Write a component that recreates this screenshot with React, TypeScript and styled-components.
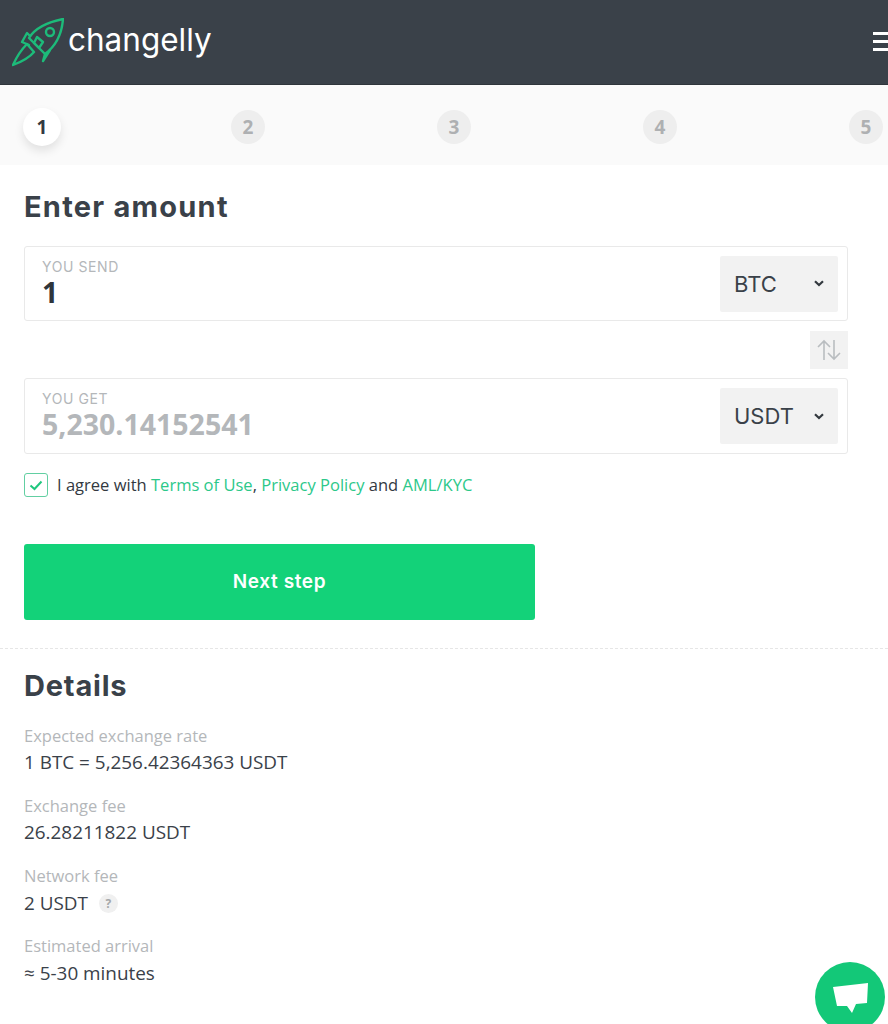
import styled, { createGlobalStyle } from "styled-components"

const GlobalStyle = createGlobalStyle`
    html, body {
        margin: 0;
        height: 1024px;
        overflow: hidden;
        background: #fff;
        font-family: "Open Sans", "Liberation Sans", sans-serif;
        color: #3a4149;
    }
    * { box-sizing: border-box; }
`

const Rocket = () => (
    <svg width="52" height="49" viewBox="0 0 52 49" fill="none" stroke="#1dbb7a" strokeWidth="2.4" strokeLinejoin="round" strokeLinecap="round">
        <path d="M1 47 C5 38 10 31 15 26 L22 34 C17 40 9 44 1 47 Z" />
        <path d="M17 20 C23 10 36 4 51 1 C50 14 45 27 33 36 Z" />
        <path d="M18 18 L15 15 L10 24 L17 27" />
        <path d="M33 36 L31 43 L38 32" />
        <circle cx="38" cy="14" r="4" />
        <path d="M25 19 L31 24 L27 30 L22 25 Z" />
    </svg>
)

const steps = [1, 2, 3, 4, 5]

const details = [
    { label: "Expected exchange rate", value: "1 BTC = 5,256.42364363 USDT" },
    { label: "Exchange fee", value: "26.28211822 USDT" },
    { label: "Network fee", value: "2 USDT", hint: true },
    { label: "Estimated arrival", value: "≈ 5-30 minutes" },
]

export default function App() {
    return (
        <Page>
            <GlobalStyle />
            <Header>
                <Logo>
                    <Rocket />
                    <LogoText>changelly</LogoText>
                </Logo>
                <Burger>
                    <span></span>
                    <span></span>
                    <span></span>
                </Burger>
            </Header>
            <Steps>
                {steps.map((s) => (
                    <StepCell key={s}>
                        <Step $active={s === 1}>{s}</Step>
                    </StepCell>
                ))}
            </Steps>
            <Main>
                <Title>Enter amount</Title>
                <Field>
                    <FieldBody>
                        <FieldLabel>YOU SEND</FieldLabel>
                        <FieldValue>1</FieldValue>
                    </FieldBody>
                    <Select>
                        BTC
                        <Chevron />
                    </Select>
                </Field>
                <SwapRow>
                    <Swap>
                        <svg width="24" height="22" viewBox="0 0 24 22" fill="none" stroke="#b9bdc0" strokeWidth="1.6">
                            <path d="M7 21 V2 M1 8 L7 2 L13 8" />
                            <path d="M17 1 V20 M11 14 L17 20 L23 14" />
                        </svg>
                    </Swap>
                </SwapRow>
                <Field $tall>
                    <FieldBody>
                        <FieldLabel>YOU GET</FieldLabel>
                        <FieldValue $muted>5,230.14152541</FieldValue>
                    </FieldBody>
                    <Select>
                        USDT
                        <Chevron />
                    </Select>
                </Field>
                <Agree>
                    <Check>
                        <svg width="14" height="11" viewBox="0 0 14 11" fill="none" stroke="#1fc77e" strokeWidth="2">
                            <path d="M1.5 5.5 L5.5 9 L12.5 1.5" />
                        </svg>
                    </Check>
                    <span>
                        I agree with <Link>Terms of Use</Link>, <Link>Privacy Policy</Link> and <Link>AML/KYC</Link>
                    </span>
                </Agree>
                <NextButton>Next step</NextButton>
            </Main>
            <Details>
                <DetailsTitle>Details</DetailsTitle>
                {details.map((d) => (
                    <Detail key={d.label}>
                        <DetailLabel>{d.label}</DetailLabel>
                        <DetailValue>
                            {d.value}
                            {d.hint && <Hint>?</Hint>}
                        </DetailValue>
                    </Detail>
                ))}
            </Details>
            <Chat>
                <svg width="38" height="34" viewBox="0 0 38 34" fill="#fff">
                    <path d="M2 7 L37 3 L36 23 L25 24 L21 33 L16 26 L6 26 Z" />
                </svg>
            </Chat>
        </Page>
    )
}

const Page = styled.div`
    width: 888px;
    height: 1024px;
    overflow: hidden;
    position: relative;
`

const Header = styled.header`
    height: 85px;
    background: #3a4149;
    border-bottom: 1px solid #2f353b;
    display: flex;
    align-items: center;
    justify-content: space-between;
    padding: 0 0 0 12px;
    overflow: hidden;
`

const Logo = styled.div`
    display: flex;
    align-items: center;
    gap: 4px;
`

const LogoText = styled.span`
    font-family: Inter, "Liberation Sans", sans-serif;
    font-size: 31.5px;
    font-weight: 400;
    color: #fff;
    margin-top: -5px;
`

const Burger = styled.div`
    width: 24px;
    margin-right: -9px;
    margin-top: -1px;
    display: flex;
    flex-direction: column;
    gap: 5px;
    span {
        display: block;
        height: 3px;
        background: #fff;
    }
`

const Steps = styled.div`
    height: 80px;
    background: #fafafa;
    display: flex;
    padding: 4px 0 0 42px;
    align-items: center;
`

const StepCell = styled.div`
    width: 206px;
    flex: none;
    height: 0;
    display: flex;
    align-items: center;
`

const Step = styled.div<{ $active?: boolean }>`
    flex: none;
    width: ${(p) => (p.$active ? "38px" : "34px")};
    height: ${(p) => (p.$active ? "38px" : "34px")};
    margin-left: ${(p) => (p.$active ? "-19px" : "-17px")};
    border-radius: 50%;
    background: ${(p) => (p.$active ? "#fff" : "#eeeeee")};
    box-shadow: ${(p) => (p.$active ? "0 5px 10px rgba(0,0,0,0.1)" : "none")};
    color: ${(p) => (p.$active ? "#33393f" : "#aeb0b2")};
    display: flex;
    align-items: center;
    justify-content: center;
    font-size: 19px;
    font-weight: 700;
`

const Main = styled.main`
    padding: 0 40px 0 24px;
`

const Title = styled.h2`
    margin: 0;
    padding-top: 23px;
    height: 81px;
    font-family: Inter, "Liberation Sans", sans-serif;
    font-size: 29px;
    line-height: 38px;
    font-weight: 700;
    letter-spacing: 1.25px;
    color: #3a4149;
`

const Field = styled.div<{ $tall?: boolean }>`
    height: ${(p) => (p.$tall ? "76px" : "75px")};
    border: 1px solid #e9e9e9;
    border-radius: 3px;
    display: flex;
    align-items: center;
    justify-content: space-between;
    padding: 0 9px 0 17px;
`

const FieldBody = styled.div`
    display: flex;
    flex-direction: column;
    margin-top: -2px;
`

const FieldLabel = styled.div`
    font-family: Inter, "Liberation Sans", sans-serif;
    font-size: 14px;
    line-height: 18px;
    letter-spacing: 0.6px;
    margin-bottom: 1px;
    color: #b4b7ba;
`

const FieldValue = styled.div<{ $muted?: boolean }>`
    font-size: 28.5px;
    line-height: 31px;
    font-weight: 700;
    color: ${(p) => (p.$muted ? "#b4b7ba" : "#2f353b")};
`

const Select = styled.div`
    width: 118px;
    height: 56px;
    background: #f2f2f2;
    border-radius: 2px;
    display: flex;
    align-items: center;
    justify-content: space-between;
    padding: 0 14px;
    font-family: Inter, "Liberation Sans", sans-serif;
    font-size: 22px;
    color: #3a4149;
`

const Chevron = () => (
    <svg width="10" height="7" viewBox="0 0 10 7" fill="none" stroke="#33393f" strokeWidth="2.2">
        <path d="M1 1.2 L5 5 L9 1.2" />
    </svg>
)

const SwapRow = styled.div`
    display: flex;
    justify-content: flex-end;
    padding: 10px 0 9px;
`

const Swap = styled.div`
    width: 38px;
    height: 38px;
    background: #f2f2f2;
    display: flex;
    align-items: center;
    justify-content: center;
`

const Agree = styled.div`
    display: flex;
    align-items: center;
    gap: 9px;
    margin-top: 19px;
    font-size: 16.55px;
    line-height: 24px;
    color: #33393f;
`

const Check = styled.div`
    width: 24px;
    height: 24px;
    border: 1.5px solid #62cfa2;
    border-radius: 3px;
    display: flex;
    align-items: center;
    justify-content: center;
`

const Link = styled.span`
    color: #2cc88a;
`

const NextButton = styled.button`
    display: block;
    width: 511px;
    height: 76px;
    margin-top: 47px;
    padding: 0 0 2px;
    border: none;
    border-radius: 3px;
    background: #13d279;
    color: #fff;
    font-family: Inter, "Liberation Sans", sans-serif;
    font-size: 19px;
    font-weight: 600;
    letter-spacing: 0.6px;
`

const Details = styled.section`
    margin-top: 28px;
    border-top: 1px dashed #e6e6e6;
    padding: 17px 24px 0;
`

const DetailsTitle = styled.h2`
    margin: 0 0 16.5px;
    font-family: Inter, "Liberation Sans", sans-serif;
    font-size: 29px;
    line-height: 40px;
    font-weight: 700;
    letter-spacing: 0.8px;
    color: #3a4149;
`

const Detail = styled.div`
    margin-bottom: 16.83px;
`

const DetailLabel = styled.div`
    font-size: 16.5px;
    line-height: 26.5px;
    color: #b4b7ba;
`

const DetailValue = styled.div`
    font-size: 18.9px;
    line-height: 27px;
    color: #3a4149;
    display: flex;
    align-items: center;
`

const Hint = styled.span`
    width: 19px;
    height: 19px;
    margin-left: 11px;
    border-radius: 50%;
    background: #f0f0f0;
    color: #a5a8aa;
    font-size: 12px;
    font-weight: 700;
    display: flex;
    align-items: center;
    justify-content: center;
`

const Chat = styled.div`
    position: absolute;
    left: 815px;
    top: 962px;
    width: 70px;
    height: 70px;
    border-radius: 50%;
    background: #13c878;
    display: flex;
    align-items: center;
    justify-content: center;
`
